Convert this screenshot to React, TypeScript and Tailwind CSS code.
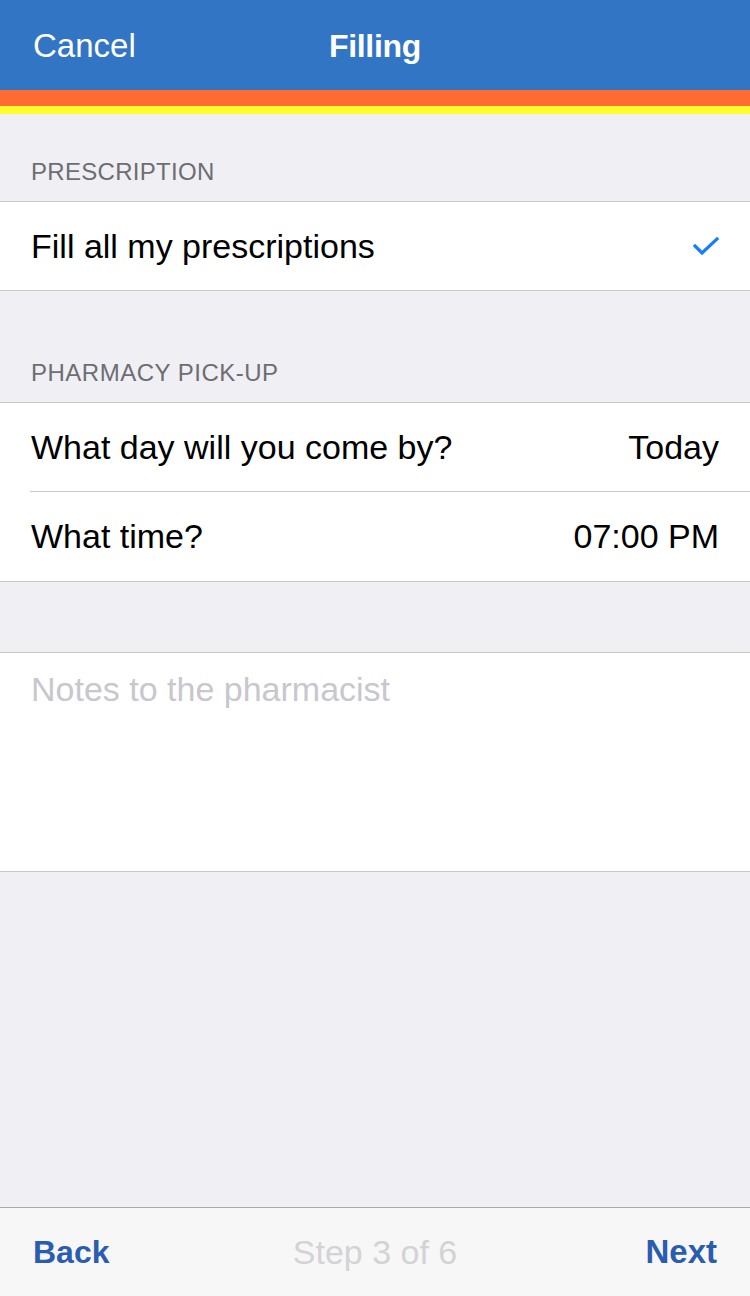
import React from "react";

export default function App() {
  const font = { fontFamily: '"Liberation Sans", Roboto, Arial, sans-serif' };
  return (
    <div className="w-[750px] h-[1296px] flex flex-col bg-[#efeff4] overflow-hidden" style={font}>
      <div className="h-[90px] bg-[#3275c5] relative flex items-center px-[33px] pt-[2px]">
        <span className="text-[33px] text-white">Cancel</span>
        <span className="absolute left-0 right-0 text-center text-[32px] font-bold text-white pointer-events-none tracking-[-0.3px]">Filling</span>
      </div>
      <div className="h-[16px] bg-[#ff6c31]" />
      <div className="h-[8px] bg-[#fefe2e]" />

      <div className="h-[87px] flex items-end px-[31px] pb-[11px]">
        <span className="text-[24px] tracking-[0.3px] text-[#6d6d72]">PRESCRIPTION</span>
      </div>
      <div className="bg-white border-y border-[#c8c7cc] h-[90px] flex items-center justify-between pl-[31px] pr-[31px]">
        <span className="text-[34px] text-black">Fill all my prescriptions</span>
        <svg width="26" height="20" viewBox="0 0 26 20">
          <path d="M2 10 L9 17 L24 3" fill="none" stroke="#147efb" strokeWidth="3.2" strokeLinecap="square" />
        </svg>
      </div>

      <div className="h-[111px] flex items-end px-[31px] pb-[11px]">
        <span className="text-[24px] tracking-[0.5px] text-[#6d6d72]">PHARMACY PICK-UP</span>
      </div>
      <div className="bg-white border-y border-[#c8c7cc]">
        <div className="h-[88px] flex items-center justify-between pl-[31px] pr-[31px]">
          <span className="text-[34px] text-black">What day will you come by?</span>
          <span className="text-[34px] text-black">Today</span>
        </div>
        <div className="ml-[30px] border-t border-[#c8c7cc]" />
        <div className="h-[89px] flex items-center justify-between pl-[31px] pr-[31px]">
          <span className="text-[34px] text-black">What time?</span>
          <span className="text-[34px] text-black">07:00 PM</span>
        </div>
      </div>

      <div className="h-[70px]" />
      <div className="bg-white border-y border-[#c8c7cc] h-[220px] px-[31px] pt-[11px]">
        <span className="text-[34px] text-[#c7c7cd]">Notes to the pharmacist</span>
      </div>

      <div className="flex-1" />
      <div className="h-[89px] bg-[#f7f7f8] border-t border-[#a9a9ab] flex items-center justify-between px-[33px] relative">
        <span className="text-[32px] font-bold text-[#2a5db0]">Back</span>
        <span className="absolute left-0 right-0 text-center text-[34px] text-[#d3d3d5] pointer-events-none">Step 3 of 6</span>
        <span className="text-[33px] font-bold text-[#2a5db0]">Next</span>
      </div>
    </div>
  );
}
